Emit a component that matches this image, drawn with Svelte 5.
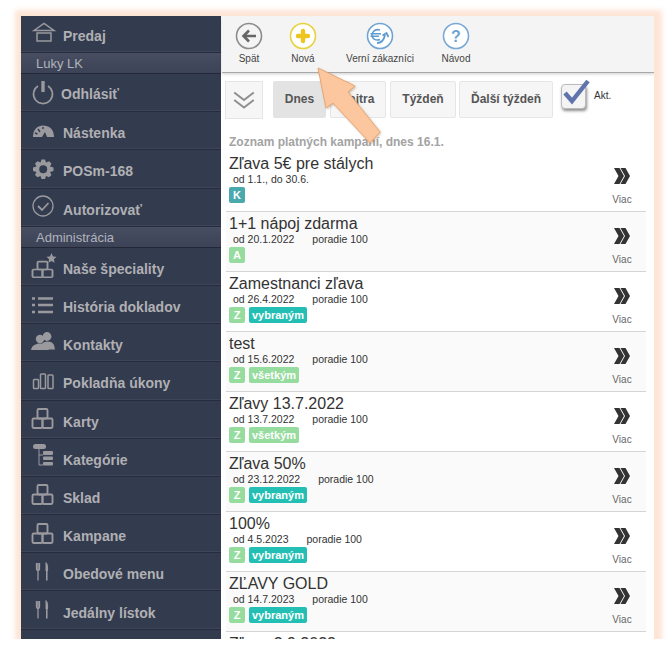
<script>
  const menu = [
    { t: 'Predaj', i: 'home', h: 37 },
    { s: 'Luky LK' },
    { t: 'Odhlásiť', i: 'power', x: 'tight' },
    { t: 'Nástenka', i: 'gauge' },
    { t: 'POSm-168', i: 'gear' },
    { t: 'Autorizovať', i: 'check' },
    { s: 'Administrácia' },
    { t: 'Naše špeciality', i: 'boxstar' },
    { t: 'História dokladov', i: 'list' },
    { t: 'Kontakty', i: 'users' },
    { t: 'Pokladňa úkony', i: 'bars' },
    { t: 'Karty', i: 'boxes' },
    { t: 'Kategórie', i: 'tree' },
    { t: 'Sklad', i: 'boxes' },
    { t: 'Kampane', i: 'boxes' },
    { t: 'Obedové menu', i: 'fork' },
    { t: 'Jedálny lístok', i: 'fork' }
  ];
  const tools = [
    { t: 'Spät', i: 'back', w: 54 },
    { t: 'Nová', i: 'plus', w: 54 },
    { t: 'Verní zákazníci', i: 'euro', w: 100 },
    { t: 'Návod', i: 'help', w: 52 }
  ];
  const rows = [
    { n: 'Zľava 5€ pre stálych', d: 'od 1.1., do 30.6.', b: 'K', c: 'k' },
    { n: '1+1 nápoj zdarma', d: 'od 20.1.2022', p: 1, b: 'A', c: 'g' },
    { n: 'Zamestnanci zľava', d: 'od 26.4.2022', p: 1, b: 'Z', c: 'g', w: 'vybraným' },
    { n: 'test', d: 'od 15.6.2022', p: 1, b: 'Z', c: 'g', w: 'všetkým' },
    { n: 'Zľavy 13.7.2022', d: 'od 13.7.2022', p: 1, b: 'Z', c: 'g', w: 'všetkým' },
    { n: 'Zľava 50%', d: 'od 23.12.2022', p: 1, b: 'Z', c: 'g', w: 'vybraným' },
    { n: '100%', d: 'od 4.5.2023', p: 1, b: 'Z', c: 'g', w: 'vybraným' },
    { n: 'ZĽAVY GOLD', d: 'od 14.7.2023', p: 1, b: 'Z', c: 'g', w: 'vybraným' }
  ];
  const tabs = [
    { t: 'Dnes', w: 53, on: true },
    { t: 'Zajtra', w: 56 },
    { t: 'Týždeň', w: 66 },
    { t: 'Ďalší týždeň', w: 94 }
  ];
</script>

{#snippet boxes()}
  <rect x="6.5" y="2" width="10" height="9.5" rx="1.2" /><rect x="1.5" y="11.5" width="10" height="9.5" rx="1.2" /><rect x="11.5" y="11.5" width="10" height="9.5" rx="1.2" />
{/snippet}

{#snippet icon(n)}
  <svg class="mi" viewBox="0 0 24 24" width="24" height="24">
    {#if n === 'home'}
      <path d="M3 9.5 L13 2.5 L23 9.5 Z M6 12 H20 V20 H6 Z" />
    {:else if n === 'power'}
      <path d="M7 6 A9.5 9.5 0 1 0 17 6" stroke-width="1.6" /><path d="M12 1 V12" stroke-width="3.4" />
    {:else if n === 'gauge'}
      <path class="f" d="M2 18 C2 10 7 6.5 12 6.5 C18 6.5 23 10 23 18 H16 L14 13 L11 18 H4 Z" /><path d="M7 10 L9 13 M12 8 V10 M4 14 L6.5 15" stroke="#333b4e" stroke-width="1.4" />
    {:else if n === 'gear'}
      <path class="f" fill-rule="evenodd" d="M10.5 2.5 H14 L15 5.5 L18 4.2 L20.5 6.5 L19 9.5 L22.5 10.5 V14 L19 15 L20.5 18 L18 20.3 L15 19 L14 22 H10.5 L9.5 19 L6.5 20.3 L4 18 L5.5 15 L2 14 V10.5 L5.5 9.5 L4 6.5 L6.5 4.2 L9.5 5.5 Z M12.2 8.2 A4 4 0 1 0 12.2 16.2 A4 4 0 1 0 12.2 8.2 Z" />
    {:else if n === 'check'}
      <circle cx="12" cy="11" r="10" stroke-width="1.3" /><path d="M7 11 L11 15 L17.5 8" stroke-width="1.8" />
    {:else if n === 'boxstar'}
      <g transform="translate(0 6) scale(1 .82)" class="thick">{@render boxes()}</g>
      <path class="f" d="M20.5 -1 L22 2.4 L25.5 2.8 L22.9 5.2 L23.6 8.8 L20.5 7 L17.4 8.8 L18.1 5.2 L15.5 2.8 L19 2.4 Z" />
    {:else if n === 'list'}
      <path d="M7 5.5 H22 M7 12 H22 M7 19 H22" stroke-width="2.6" /><path d="M1 5.5 H4 M1 12 H4 M1 19 H4" stroke-width="2.6" />
    {:else if n === 'users'}
      <circle class="f" cx="16" cy="5.5" r="4.4" /><path class="f" d="M11 13 C12 10 21 9 23 14 L24 18.5 H18 Z" /><circle class="f" cx="9" cy="8" r="4.2" stroke="#333b4e" /><path class="f" d="M0 19 C1 11 16 10 18 19 Z" stroke="#333b4e" />
    {:else if n === 'bars'}
      <rect x="2.5" y="10.5" width="5" height="9" rx=".8" /><rect x="9.5" y="5" width="5" height="14.5" rx=".8" /><rect x="17" y="6" width="5" height="13.5" rx=".8" />
    {:else if n === 'boxes'}
      <g class="thick">{@render boxes()}</g>
    {:else if n === 'tree'}
      <path d="M8 3 V20 H12 M8 10 H12" stroke-width="1" /><rect class="f" x="2" y="-1" width="13" height="5" rx="2.5" /><rect class="f" x="12" y="6" width="10" height="4" rx="1" /><rect class="f" x="12" y="11.5" width="10" height="3.5" rx="1" /><rect class="f" x="12" y="17" width="10" height="3.5" rx="1" />
    {:else if n === 'fork'}
      <path d="M5.5 3 V9 C5.5 11 8.5 11 8.5 9 V3 M7 3 V20.5" stroke-width="1.3" /><path class="f" d="M14.5 2 C17 3 17.5 7 17 11 H16.6 V20.5 H15 V11 H14.5 Z" />
    {/if}
  </svg>
{/snippet}

{#snippet toolIcon(n)}
  <svg viewBox="0 0 28 28" width="28" height="28" class="ti">
    {#if n === 'back'}
      <circle cx="14" cy="14" r="12.5" fill="none" stroke="#8c8c8c" stroke-width="1.6" />
      <path d="M21 14 H9 M14 8.5 L8.5 14 L14 19.5" fill="none" stroke="#666" stroke-width="2.6" />
    {:else if n === 'plus'}
      <circle cx="14" cy="14" r="12.5" fill="#fff" stroke="#e8d23c" stroke-width="1.6" />
      <path d="M14 9 V19 M9 14 H19" stroke="#eec51e" stroke-width="4.4" stroke-linecap="round" />
    {:else if n === 'euro'}
      <circle cx="14" cy="14" r="12.5" fill="#fff" stroke="#6fa5d6" stroke-width="1.6" />
      <path d="M14 8 C9 6.5 6 10 6 13 C6 17 10 19 14 17.5 M4.5 11.8 H15 M4.5 14.2 H13" fill="none" stroke="#5e9bd2" stroke-width="1.5" />
      <path d="M11 21 C15 21 18 18 19 13 M16.5 13.5 L20.5 11 L22.5 15" fill="none" stroke="#5e9bd2" stroke-width="1.8" />
    {:else}
      <circle cx="14" cy="14" r="12.5" fill="#fff" stroke="#7aa9d6" stroke-width="1.6" />
      <text x="14" y="19.5" text-anchor="middle" class="q">?</text>
    {/if}
  </svg>
{/snippet}

<div class="glow">
  <div class="frame">
    <nav class="side">
      {#each menu as m}
        {#if m.s}
          <div class="sec">{m.s}</div>
        {:else}
          <div class="item" class:first={m.h} class:tight={m.x}>
            <span class="ic">{@render icon(m.i)}</span><span>{m.t}</span>
          </div>
        {/if}
      {/each}
    </nav>

    <main class="main">
      <header class="bar">
        {#each tools as t}
          <div class="tool" style="width:{t.w}px">
            {@render toolIcon(t.i)}
            <span>{t.t}</span>
          </div>
        {/each}
      </header>

      <div class="filters">
        <div class="chev">
          <svg viewBox="0 0 24 24" width="26" height="26"><path d="M3 5 L12 12 L21 5 M3 12 L12 19 L21 12" fill="none" stroke="#8f8f8f" stroke-width="1.8" /></svg>
        </div>
        {#each tabs as t}
          <div class="tab" class:on={t.on} style="width:{t.w}px">{t.t}</div>
        {/each}
        <div class="cb">
          <svg viewBox="0 0 30 30" width="30" height="30"><path d="M4 15 L11 23 L27 3" fill="none" stroke="#5f74ad" stroke-width="4.4" /></svg>
        </div>
        <span class="akt">Akt.</span>
      </div>

      <h2>Zoznam platných kampaní, dnes 16.1.</h2>

      <div class="list">
        {#each rows as r, idx}
          <div class="row" class:alt={idx % 2 === 1}>
            <div class="info">
              <div class="name">{r.n}</div>
              <div class="date"><span>{r.d}</span>{#if r.p}<span class="ord">poradie 100</span>{/if}</div>
              <div class="tags">
                <span class="tag {r.c}">{r.b}</span>
                {#if r.w}<span class="tag word" class:all={r.w === 'všetkým'}>{r.w}</span>{/if}
              </div>
            </div>
            <div class="more">
              <svg viewBox="0 0 16 16" width="16" height="16"><path d="M0 0 H5.5 L10 8 L5.5 16 H0 L4.5 8 Z M6.5 0 H11.5 L16 8 L11.5 16 H6.5 L11 8 Z" fill="#333" /></svg>
              <span>Viac</span>
            </div>
          </div>
        {/each}
        <div class="row stub"><div class="name">Zľava 3.9.2023</div></div>
      </div>
    </main>

    <svg class="arrow" viewBox="0 0 72 84" width="72" height="84">
      <path d="M7 6 L44 24 L37 30 L69 70 L59 81 L22 41 L15 46 Z" fill="#fcc79e" stroke="#e8a672" stroke-width="1" />
    </svg>
  </div>
</div>

<style>
  :global(body) { margin: 0; background: #fff; }
  .glow {
    width: 633px;
    height: 623px;
    margin: 16px 0 0 21px;
    box-shadow: 1px 1px 5px 7px #fde5d6;
  }
  .frame {
    position: relative;
    display: flex;
    width: 633px;
    height: 623px;
    overflow: hidden;
    background: #fff;
    font-family: "Liberation Sans", Arial, sans-serif;
  }
  .side { width: 200px; flex: none; background: #333b4e; margin-right: 1px; }
  .item {
    display: flex;
    align-items: center;
    box-sizing: border-box;
    height: 38.2px;
    padding: 5px 0 0 10px;
    color: #b0b0b4;
    font-size: 14px;
    font-weight: 700;
    border-bottom: 1px solid #262c3b;
    box-shadow: inset 0 -1px 0 #3d4559;
  }
  .item.first { height: 37px; padding-top: 3px; }
  .item.tight { padding-top: 3px; }
  .item.tight .ic { width: 30px; }
  .ic { display: flex; align-items: center; width: 32px; flex: none; margin-top: -5px; }
  .mi { fill: none; stroke: #9a9a9e; stroke-width: 1.5; overflow: visible; }
  .mi .f { fill: #9a9a9e; stroke: none; }
  .mi .thick { stroke-width: 1.9; }
  .sec {
    box-sizing: border-box;
    height: 21px;
    padding-left: 15px;
    line-height: 21px;
    font-size: 13px;
    color: #b0b3bb;
    background: linear-gradient(#474e62, #3c4356);
    border-bottom: 1px solid #222838;
  }
  .main { flex: 1; min-width: 0; }
  .bar {
    box-sizing: border-box;
    display: flex;
    height: 57px;
    padding-top: 6px;
    background: #f4f4f4;
    border-bottom: 1px solid #a8a8a8;
    box-shadow: 0 1px 3px rgba(0,0,0,.2);
  }
  .tool {
    display: flex;
    flex-direction: column;
    align-items: center;
    flex: none;
    font-size: 10px;
    color: #444;
    white-space: nowrap;
  }
  .tool span { margin-top: 3px; line-height: 11px; }
  .ti { display: block; }
  .q { font: 700 16px "Liberation Sans", Arial, sans-serif; fill: #6fa3d4; }
  .filters { display: flex; align-items: flex-start; padding: 8px 0 0 3px; height: 49px; box-sizing: border-box; }
  .chev {
    box-sizing: border-box;
    width: 38px; height: 38px;
    display: flex; align-items: center; justify-content: center;
    background: #f6f6f6; border: 1px solid #e6e6e6;
    margin-right: 10px;
  }
  .tab {
    box-sizing: border-box;
    height: 37px;
    line-height: 35px;
    text-align: center;
    font-size: 12px;
    font-weight: 700;
    color: #555;
    background: #f6f6f6;
    border: 1px solid #e6e6e6;
    border-radius: 2px;
    margin-right: 4px;
    flex: none;
  }
  .tab:nth-of-type(4) { margin-right: 3px; }
  .tab.on { background: #e3e3e3; border-color: #e3e3e3; }
  .cb {
    position: relative;
    box-sizing: border-box;
    width: 25px; height: 25px;
    margin: 3px 0 0 4px;
    background: #f4f4f4;
    border: 1px solid #bbb;
    border-radius: 4px;
    box-shadow: 1px 2px 3px rgba(0,0,0,.45);
  }
  .cb svg { position: absolute; left: -1px; top: -7px; }
  .akt { font-size: 10px; color: #333; margin: 9px 0 0 8px; }
  h2 {
    margin: 13px 0 0;
    padding-left: 7px;
    font-size: 12px;
    line-height: 14px;
    font-weight: 700;
    color: #a3a3a3;
  }
  .list { margin: 3px 8px 0 4px; }
  .row {
    box-sizing: border-box;
    display: flex;
    height: 60px;
    padding: 3px 0 0 3px;
    border-bottom: 1px solid #d4d4d4;
    background: #fff;
  }
  .row.alt { background: #fafafa; }
  .row.stub { border: 0; }
  .info { flex: 1; min-width: 0; }
  .name { font-size: 16px; line-height: 18px; color: #333; }
  .date { display: flex; font-size: 10.5px; line-height: 13px; color: #333; padding-left: 4px; }
  .ord { margin-left: 18px; }
  .tags { display: flex; gap: 4px; margin-top: 1px; }
  .tag {
    box-sizing: border-box;
    min-width: 16px;
    height: 16px;
    border-radius: 2px;
    text-align: center;
    font-size: 11px;
    line-height: 16px;
    font-weight: 700;
    color: #fff;
  }
  .tag.k { background: #4aa9ad; }
  .tag.g { background: #95dc9e; }
  .tag.word { background: #23bfb4; padding: 0 3px; }
  .tag.word.all { background: #95dc9e; }
  .more {
    width: 48px;
    flex: none;
    display: flex;
    flex-direction: column;
    align-items: center;
    color: #666;
    font-size: 10px;
    padding-top: 13px;
    box-sizing: border-box;
  }
  .more span { margin-top: 10px; line-height: 11px; }
  .arrow { position: absolute; left: 290px; top: 46px; filter: drop-shadow(1px 1px 1px rgba(120,80,40,.35)); }
</style>
